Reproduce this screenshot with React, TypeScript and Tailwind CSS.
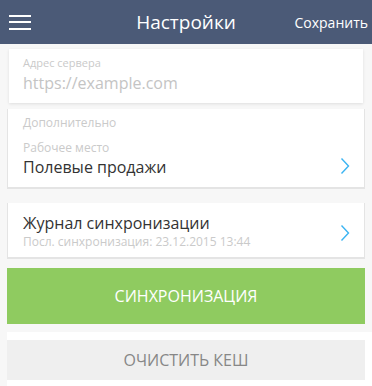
function Chevron() {
  return (
    <svg width="10" height="18" viewBox="0 0 10 18" fill="none" className="shrink-0">
      <path d="M1.5 1.5 L8.5 9 L1.5 16.5" stroke="#3bb4f2" strokeWidth="1.4" />
    </svg>
  );
}

export default function App() {
  return (
    <div className="w-[372px] h-[386px] overflow-hidden bg-[#f7f7f7] font-['Open_Sans',sans-serif]">
      {/* Header */}
      <div className="h-[44px] bg-[#4b5a77] flex items-center px-[9px] relative">
        <div className="flex flex-col gap-[4.5px] w-[22px]">
          <span className="block h-[2px] bg-white" />
          <span className="block h-[2px] bg-white" />
          <span className="block h-[2px] bg-white" />
        </div>
        <div className="absolute left-0 right-0 text-center text-white text-[19px] pointer-events-none">Настройки</div>
        <div className="ml-auto text-white text-[14px] -mr-[5px]">Сохранить</div>
      </div>

      {/* Server address */}
      <div className="mx-[9px] mt-[5px] h-[54px] bg-white shadow-[0_1px_3px_rgba(0,0,0,0.1)] px-[14px] pt-[7px]">
        <div className="text-[11px] text-[#cacaca] leading-[14px]">Адрес сервера</div>
        <div className="text-[16px] text-[#c4c4c4] leading-[22px] mt-[2px]">https://example.com</div>
      </div>

      {/* Additional */}
      <div className="mx-[7px] mt-[6px] h-[80px] bg-white border-x border-b-2 border-[#e4e4e4] pl-[15px] pr-[14px] pt-[6px]">
        <div className="text-[12px] text-[#cacaca] leading-[16px]">Дополнительно</div>
        <div className="flex items-end justify-between mt-[9px]">
          <div>
            <div className="text-[12px] text-[#cacaca] leading-[16px]">Рабочее место</div>
            <div className="text-[16px] text-[#333] leading-[22px]">Полевые продажи</div>
          </div>
          <div className="mb-[3px]"><Chevron /></div>
        </div>
      </div>

      {/* Sync log */}
      <div className="mx-[7px] mt-[14px] h-[56px] bg-white border-x border-b-2 border-[#e4e4e4] pl-[15px] pr-[14px] pt-[10px] flex items-center justify-between">
        <div className="-mt-[8px]">
          <div className="text-[16px] text-[#333] leading-[22px]">Журнал синхронизации</div>
          <div className="text-[12px] text-[#cacaca] leading-[16px]">Посл. синхронизация: 23.12.2015 13:44</div>
        </div>
        <div className="-mt-[4px]"><Chevron /></div>
      </div>

      {/* Sync button */}
      <div className="mx-[7px] mt-[9px] h-[56px] bg-[#8fcb60] flex items-center justify-center text-white text-[16px] uppercase">
        Синхронизация
      </div>

      {/* Clear cache */}
      <div className="ml-[7px] mt-[8px] bg-white pt-[8px] pb-[6px]">
        <div className="h-[40px] bg-[#efefef] flex items-center justify-center text-[#878787] text-[16px] mr-[7px]">
          ОЧИСТИТЬ КЕШ
        </div>
      </div>
    </div>
  );
}
